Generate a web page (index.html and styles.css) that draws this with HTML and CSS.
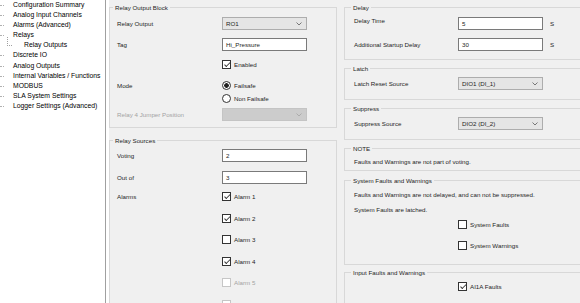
FILE: index.html
```html
<!DOCTYPE html>
<html lang="en">
<head>
    <meta charset="UTF-8">
    <meta name="viewport" content="width=device-width, initial-scale=1.0">
    <title>Relay Outputs</title>
    <link rel="stylesheet" href="styles.css">
</head>
<body>
    <div class="window">
        <ul class="tree">
            <li>Configuration Summary</li>
            <li>Analog Input Channels</li>
            <li>Alarms (Advanced)</li>
            <li class="open">Relays</li>
            <li class="child">Relay Outputs</li>
            <li>Discrete IO</li>
            <li>Analog Outputs</li>
            <li>Internal Variables / Functions</li>
            <li>MODBUS</li>
            <li>SLA System Settings</li>
            <li>Logger Settings (Advanced)</li>
        </ul>
        <div class="splitter"></div>

        <div class="col col-left">
            <fieldset class="group block">
                <legend>Relay Output Block</legend>
                <div class="row h21"><span class="lbl">Relay Output</span><div class="combo">RO1<svg class="chev" viewBox="0 0 6 4"><polyline points="0.5,0.5 3,3 5.5,0.5"/></svg></div></div>
                <div class="row h22"><span class="lbl">Tag</span><div class="field">Hi_Pressure</div></div>
                <div class="row opt h21"><span class="lbl"></span><span class="box on"></span><span class="txt">Enabled</span></div>
                <div class="row opt h13"><span class="lbl">Mode</span><span class="radio on"></span><span class="txt">Failsafe</span></div>
                <div class="row opt h14"><span class="lbl"></span><span class="radio"></span><span class="txt">Non Failsafe</span></div>
                <div class="row"><span class="lbl off">Relay 4 Jumper Position</span><div class="combo disabled"><svg class="chev" viewBox="0 0 6 4"><polyline points="0.5,0.5 3,3 5.5,0.5"/></svg></div></div>
            </fieldset>

            <fieldset class="group sources">
                <legend>Relay Sources</legend>
                <div class="row h22"><span class="lbl">Voting</span><div class="field">2</div></div>
                <div class="row h21"><span class="lbl">Out of</span><div class="field">3</div></div>
                <div class="row opt h22"><span class="lbl">Alarms</span><span class="box on"></span><span class="txt">Alarm 1</span></div>
                <div class="row opt h21"><span class="lbl"></span><span class="box on"></span><span class="txt">Alarm 2</span></div>
                <div class="row opt h22"><span class="lbl"></span><span class="box"></span><span class="txt">Alarm 3</span></div>
                <div class="row opt h21"><span class="lbl"></span><span class="box on"></span><span class="txt">Alarm 4</span></div>
                <div class="row opt h22"><span class="lbl"></span><span class="box off"></span><span class="txt off">Alarm 5</span></div>
                <div class="row opt h21"><span class="lbl"></span><span class="box off"></span><span class="txt off">Alarm 6</span></div>
            </fieldset>
        </div>

        <div class="col col-right">
            <fieldset class="group delay">
                <legend>Delay</legend>
                <div class="row h21"><span class="lbl raised">Delay Time</span><div class="field">5</div><span class="unit">S</span></div>
                <div class="row"><span class="lbl">Additional Startup Delay</span><div class="field">30</div><span class="unit">S</span></div>
            </fieldset>

            <fieldset class="group single">
                <legend>Latch</legend>
                <div class="row"><span class="lbl">Latch Reset Source</span><div class="combo">DIO1 (DI_1)<svg class="chev" viewBox="0 0 6 4"><polyline points="0.5,0.5 3,3 5.5,0.5"/></svg></div></div>
            </fieldset>

            <fieldset class="group single">
                <legend>Suppress</legend>
                <div class="row"><span class="lbl">Suppress Source</span><div class="combo">DIO2 (DI_2)<svg class="chev" viewBox="0 0 6 4"><polyline points="0.5,0.5 3,3 5.5,0.5"/></svg></div></div>
            </fieldset>

            <fieldset class="group note">
                <legend>NOTE</legend>
                <p class="line">Faults and Warnings are not part of voting.</p>
            </fieldset>

            <fieldset class="group system">
                <legend>System Faults and Warnings</legend>
                <p class="line h15">Faults and Warnings are not delayed, and can not be suppressed.</p>
                <p class="line h15">System Faults are latched.</p>
                <div class="row opt h21"><span class="lbl"></span><span class="box"></span><span class="txt">System Faults</span></div>
                <div class="row opt"><span class="lbl"></span><span class="box"></span><span class="txt">System Warnings</span></div>
            </fieldset>

            <fieldset class="group inputs">
                <legend>Input Faults and Warnings</legend>
                <div class="row opt h21"><span class="lbl"></span><span class="box on"></span><span class="txt">AI1A Faults</span></div>
                <div class="row opt h21"><span class="lbl"></span><span class="box"></span><span class="txt">AI1A Warnings</span></div>
            </fieldset>
        </div>
    </div>
</body>
</html>
```

FILE: styles.css
```css
body {
    margin: 0;
    background: #f0f0f0;
    font-family: "Liberation Sans", Arial, sans-serif;
    color: #1e1e1e;
    overflow: hidden;
}
.window {
    display: flex;
    width: 580px;
    height: 303px;
    overflow: hidden;
}

/* navigation tree */
.tree {
    flex: none;
    width: 105px;
    margin: 0;
    padding: 0;
    list-style: none;
    background: #fff;
    border-right: 1px solid #a0a0a0;
    font-size: 6.8px;
    line-height: 10.1px;
    color: #000;
    white-space: nowrap;
}
.tree li {
    position: relative;
    padding-left: 13px;
}
.tree li::before {
    content: "";
    position: absolute;
    left: 0;
    top: 5px;
    width: 4px;
    border-top: 1px dotted #b0b0b0;
}
.tree li.child {
    padding-left: 24px;
}
.tree li.child::before {
    left: 7px;
    top: -3px;
    width: 4px;
    height: 8px;
    border-top: 0;
    border-left: 1px dotted #a0a0a0;
    border-bottom: 1px dotted #a0a0a0;
}
.splitter {
    flex: none;
    width: 3px;
    background: #fff;
}

/* columns and group boxes */
.col {
    flex: none;
    font-size: 6.2px;
}
.col-left {
    width: 228px;
}
.col-right {
    width: 260px;
    margin-left: 7px;
}
.group {
    margin: 0;
    border: 1px solid #d8d8d8;
    border-radius: 0;
    padding: 5px 0 8px 7px;
    min-width: 0;
}
.group legend {
    padding: 0 2px;
    margin-left: -4px;
    line-height: 9px;
    font-size: 6.2px;
}
.col-right .group {
    padding-left: 9px;
}
.col-right .group legend {
    margin-left: -3px;
}
.block {
    margin-top: 3px;
    padding-bottom: 6px;
}
.sources {
    margin-top: 8px;
    padding-top: 4px;
    padding-bottom: 0;
}
.delay {
    margin-top: 3px;
}
.single {
    margin-top: 4px;
    padding-top: 4px;
    padding-bottom: 9px;
}
.note {
    margin-top: 4px;
    padding-top: 4px;
    padding-bottom: 4px;
}
.system {
    margin-top: 5px;
    padding-bottom: 14px;
}
.inputs {
    margin-top: 3px;
    padding-bottom: 0;
}

/* rows */
.row {
    display: flex;
    align-items: flex-start;
    line-height: 13px;
    white-space: nowrap;
}
.row.opt {
    line-height: 9px;
}
.h13 { height: 13px; }
.h14 { height: 14px; }
.h15 { height: 15px; }
.h21 { height: 21px; }
.h22 { height: 22px; }
.lbl {
    flex: none;
    width: 105px;
}
.lbl.raised {
    line-height: 7px;
}
.col-right .lbl {
    width: 104px;
}
.lbl.off,
.txt.off {
    color: #a3a3a3;
}
.line {
    margin: 0;
    line-height: 9px;
    white-space: nowrap;
}

/* controls */
.field,
.combo {
    flex: none;
    box-sizing: border-box;
    width: 85px;
    height: 13px;
    padding-left: 3px;
}
.field {
    background: #fff;
    border: 1px solid #7a7a7a;
    line-height: 11px;
}
.combo {
    display: flex;
    justify-content: space-between;
    align-items: center;
    padding-right: 4px;
    background: #e5e5e5;
    border: 1px solid #adadad;
}
.combo.disabled {
    justify-content: flex-end;
    background: #cccccc;
    border-color: #c4c4c4;
}
.chev {
    width: 6px;
    height: 4px;
    fill: none;
    stroke: #6a6a6a;
    stroke-width: 0.9;
}
.combo.disabled .chev {
    stroke: #a8a8a8;
}
.unit {
    margin-left: 7px;
}
.box,
.radio {
    flex: none;
    box-sizing: border-box;
    width: 9px;
    height: 9px;
    border: 1px solid #333;
    background: #fff;
    position: relative;
    margin-right: 3px;
}
.box.off {
    border-color: #c6c6c6;
}
.box.on::after {
    content: "";
    position: absolute;
    left: 2.5px;
    top: 0;
    width: 2px;
    height: 4.5px;
    border: solid #333;
    border-width: 0 1px 1px 0;
    transform: rotate(45deg);
}
.radio {
    border-radius: 50%;
}
.radio.on {
    background: radial-gradient(circle, #222 0 2px, #fff 2.6px);
}
```
